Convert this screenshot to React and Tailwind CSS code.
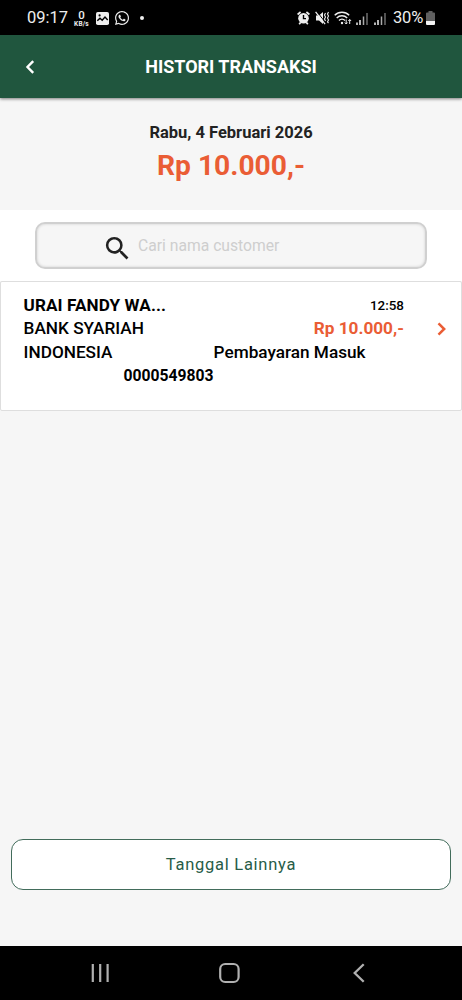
import { MdSearch } from "react-icons/md";
import { FaWhatsapp } from "react-icons/fa";

function Signal() {
  return (
    <svg width="13" height="14" viewBox="0 0 13 14" className="shrink-0">
      <path d="M1 11.5v2.5M4 9v5" stroke="#eeeeee" strokeWidth="1.5" />
      <path d="M7.5 5.5v8.5" stroke="#aaaaaa" strokeWidth="1.5" />
      <path d="M11 2v12" stroke="#686868" strokeWidth="1.6" />
    </svg>
  );
}

function StatusBar() {
  return (
    <div className="flex h-[35px] shrink-0 items-center bg-black pl-[27px] text-[#eeeeee]">
      <span className="w-[46px] text-[16.5px] leading-[20px]">09:17</span>
      <div className="flex w-[17px] flex-col items-center pt-[2px]">
        <span className="text-[11.5px] font-medium leading-[12px]">0</span>
        <span className="-mt-px text-[6.5px] font-bold leading-[8px] tracking-[0.2px]">KB/s</span>
      </div>
      <svg width="13" height="13" viewBox="0 0 13 13" className="ml-[6px] mt-[1px] shrink-0">
        <rect width="13" height="13" rx="1.8" fill="currentColor" />
        <path d="M1.3 8.8L4 6.2l2.2 2L9 5l2.7 3" fill="none" stroke="#000" strokeWidth="1.4" />
        <circle cx="3.6" cy="3.4" r="1.1" fill="#000" />
      </svg>
      <FaWhatsapp className="ml-[5px] mt-px size-[16px]" />
      <span className="ml-[10px] size-[4px] rounded-full bg-[#eeeeee]" />
      <svg width="13" height="14" viewBox="0 0 13 14" className="ml-[153px] mt-px shrink-0">
        <path d="M.6 3.5L3.6 1M12.4 3.5l-3-2.5M2.2 13.3l1.5-2M10.8 13.3l-1.5-2" stroke="currentColor" strokeWidth="1.7" />
        <circle cx="6.5" cy="7.3" r="5.3" fill="currentColor" />
        <path d="M6.5 4v3.6H9" fill="none" stroke="#000" strokeWidth="1.4" />
      </svg>
      <svg width="15" height="14" viewBox="0 0 15 14" className="ml-[5px] mt-px shrink-0">
        <path d="M1 4.5h3l4-3.5v12l-4-3.5H1z" fill="currentColor" />
        <path d="M1.6 0l9 12" stroke="#000" strokeWidth="1" />
        <path d="M.6 .8l9.5 12.4" stroke="currentColor" strokeWidth="1.3" />
        <path d="M10.5 2l-1 2 1 2-1 2 1 2M13.5 1l-1 2 1 2-1 2 1 2-1 2 1 1" stroke="currentColor" strokeWidth="1.1" fill="none" />
      </svg>
      <svg width="18" height="14" viewBox="0 0 18 14" className="ml-[4px] mt-px shrink-0" fill="none" stroke="currentColor" strokeWidth="1.4">
        <path d="M.7 4.2C4.7 .3 11.2.3 15.2 4.2M2.7 7c3-3 7.5-3 10.5 0M5 9.5c1.8-1.8 4.2-1.8 6 0" />
        <circle cx="8" cy="12" r="1.2" fill="currentColor" stroke="none" />
        <path d="M12.2 8.5v4.5M10.8 11.5l1.4 1.5 1.4-1.5M15.7 13V8.5M14.3 10l1.4-1.5 1.4 1.5" strokeWidth="1" />
      </svg>
      <div className="ml-[4px] flex gap-[5px] pt-px">
        <Signal />
        <Signal />
      </div>
      <span className="ml-[6px] text-[16.5px] leading-[20px] tracking-[-0.2px]">30%</span>
      <svg width="9" height="14" viewBox="0 0 9 14" className="ml-[3px] mt-[1px] shrink-0">
        <path d="M2.5 0h4v1.5H8q1 0 1 1V10H0V2.5q0-1 1-1h1.5z" fill="#606060" />
        <path d="M0 10h9v3q0 1-1 1H1q-1 0-1-1z" fill="#f4f4f4" />
      </svg>
    </div>
  );
}

function Header() {
  return (
    <header className="relative z-10 flex h-[63px] shrink-0 items-center bg-[#20563e] shadow-[0_1px_3px_rgba(0,0,0,0.5)]">
      <button className="flex w-[60px] items-center justify-center" aria-label="Kembali">
        <svg width="10" height="14" viewBox="0 0 10 14" fill="none" stroke="white" strokeWidth="2.4">
          <path d="M8.2 1.2L2.5 7l5.7 5.8" />
        </svg>
      </button>
      <h1 className="mr-[60px] flex-1 whitespace-nowrap text-center text-[18px] font-bold leading-[24px] text-white">HISTORI TRANSAKSI</h1>
    </header>
  );
}

function Transaction() {
  return (
    <article className="flex h-[130px] shrink-0 rounded-[2px] border border-[#dedede] bg-white pl-[22.6px] pt-[12px] text-[17.2px] leading-[23.5px] text-black">
      <div className="w-[380.4px]">
        <div className="flex justify-between">
          <span className="text-[17.1px] font-bold tracking-[0.1px]">URAI FANDY WA...</span>
          <time className="text-[13.4px] font-medium">12:58</time>
        </div>
        <div className="-mt-[0.5px] flex justify-between font-medium">
          <span>BANK SYARIAH</span>
          <span className="font-bold text-[#ea5d35]">Rp 10.000,-</span>
        </div>
        <div className="mt-[0.5px] flex font-medium">
          <span className="w-[190px]">INDONESIA</span>
          <span className="whitespace-nowrap">Pembayaran Masuk</span>
        </div>
        <div className="-mt-[0.5px] pl-[100px] text-[15.7px] font-bold">0000549803</div>
      </div>
      <svg width="10" height="14" viewBox="0 0 10 14" className="ml-[33.5px] mt-[28px] shrink-0" fill="none" stroke="#ea5d35" strokeWidth="2.5">
        <path d="M1.5 1.3L7.2 7l-5.7 5.7" />
      </svg>
    </article>
  );
}

export default function App() {
  return (
    <div className="flex h-[1000px] w-[462px] flex-col overflow-hidden bg-[#f6f6f6] font-['Roboto',sans-serif]">
      <StatusBar />
      <Header />
      <section className="flex h-[112px] shrink-0 flex-col items-center pt-[23px]">
        <p className="text-[16.5px] font-bold leading-[24px] text-[#222222]">Rabu, 4 Februari 2026</p>
        <p className="text-[28.2px] font-bold leading-[42px] text-[#ea5d35]">Rp 10.000,-</p>
      </section>
      <div className="h-[71px] shrink-0 bg-white px-[35px] pt-[12px]">
        <label className="flex h-[47px] items-center rounded-[10px] border-2 border-[#d0d0d0] bg-[#f6f6f6] pl-[65px] shadow-[inset_0_0_3px_rgba(0,0,0,0.16)]">
          <MdSearch className="mt-[5px] size-[31px] shrink-0 text-[#222222]" />
          <input
            className="ml-[5px] w-[240px] bg-transparent pt-px text-[15.7px] outline-none placeholder:text-[#cecece]"
            placeholder="Cari nama customer"
          />
        </label>
      </div>
      <Transaction />
      <main className="flex flex-1 flex-col justify-end px-[11px] pb-[56px]">
        <button className="h-[51px] w-full rounded-[12px] border border-[#426c5b] bg-white pt-px text-[16.5px] tracking-[0.73px] text-[#285c47]">
          Tanggal Lainnya
        </button>
      </main>
      <nav className="flex h-[54px] shrink-0 items-center bg-black pl-[91px] text-[#b0b0b0]">
        <svg width="19" height="20" viewBox="0 0 19 20" stroke="currentColor" strokeWidth="2.2">
          <path d="M1.8 1v18M9.2 1v18M16.6 1v18" />
        </svg>
        <svg width="22" height="22" viewBox="0 0 22 22" className="ml-[108px]" fill="none" stroke="currentColor" strokeWidth="2.2">
          <rect x="2.2" y="2" width="18.4" height="18" rx="5" />
        </svg>
        <svg width="14" height="20" viewBox="0 0 14 20" className="ml-[112px]" fill="none" stroke="currentColor" strokeWidth="2.3">
          <path d="M11.7 1.2L2.7 10l9 8.8" />
        </svg>
      </nav>
    </div>
  );
}
